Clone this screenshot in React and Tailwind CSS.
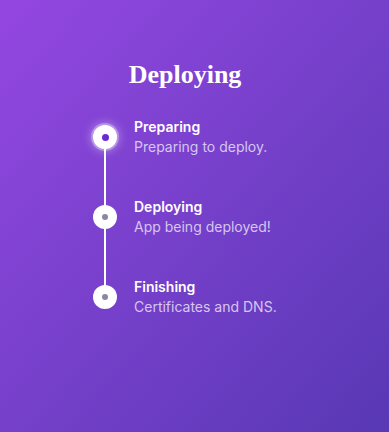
const steps = [
  { title: 'Preparing', desc: 'Preparing to deploy.', active: true },
  { title: 'Deploying', desc: 'App being deployed!' },
  { title: 'Finishing', desc: 'Certificates and DNS.' },
]

export default function App() {
  return (
    <div className="w-full h-[432px] bg-gradient-to-br from-[#9447e1] to-[#5838b4] font-['Inter',sans-serif] text-white">
      <div className="pt-[58px] pl-[93px]">
        <div className="w-[184px]">
          <h1 className="text-center text-[26px] leading-[34px] font-semibold font-['Liberation_Serif',serif]">
            Deploying
          </h1>
          <div className="relative mt-[25px] flex flex-col gap-[40px]">
            <div className="absolute left-[11px] top-[20px] bottom-[20px] w-[2px] bg-white" />
            {steps.map((s) => (
              <div key={s.title} className="relative h-[40px] flex items-center gap-[17px]">
                <div
                  className={
                    'w-6 h-6 rounded-full bg-white flex items-center justify-center shrink-0 ' +
                    (s.active ? 'shadow-[0_0_0_2px_rgba(255,255,255,0.3),0_0_8px_3px_rgba(255,255,255,0.3)]' : '')
                  }
                >
                  {s.active ? (
                    <div className="w-[7px] h-[7px] rounded-full bg-[#6d28d9]" />
                  ) : (
                    <div className="w-[6px] h-[6px] rounded-full bg-[#8b87a0]" />
                  )}
                </div>
                <div className="flex flex-col whitespace-nowrap">
                  <span className="text-[14px] leading-[20px] font-semibold">{s.title}</span>
                  <span className="text-[14px] leading-[20px] text-[#d6c6f0]">{s.desc}</span>
                </div>
              </div>
            ))}
          </div>
        </div>
      </div>
    </div>
  )
}
